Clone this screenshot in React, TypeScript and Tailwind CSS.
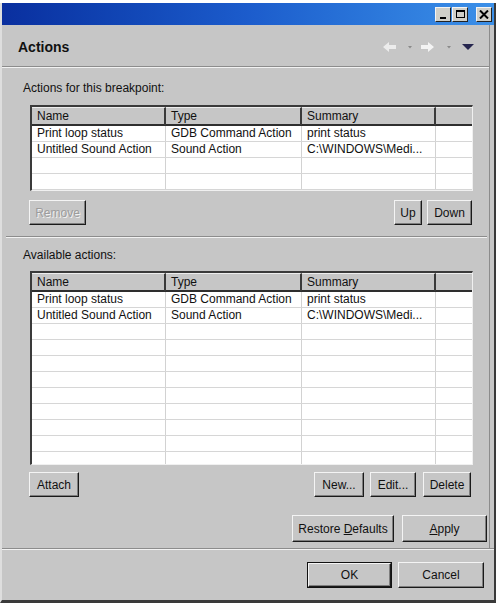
import React from "react";

const font = "font-['Liberation_Sans',Arial,sans-serif]";

type Row = [string, string, string];

const rows: Row[] = [
  ["Print loop status", "GDB Command Action", "print status"],
  ["Untitled Sound Action", "Sound Action", "C:\\WINDOWS\\Medi..."],
];

function Btn({
  children,
  className = "",
  disabled = false,
  primary = false,
}: {
  children: React.ReactNode;
  className?: string;
  disabled?: boolean;
  primary?: boolean;
}) {
  const inner = (
    <div
      className={`flex h-full w-full items-center justify-center border border-t-[#f4f4f4] border-l-[#f4f4f4] border-b-[#1a1a1a] border-r-[#1a1a1a] bg-[#c6c6c6] shadow-[inset_-1px_-1px_0_#7e7e7e] text-[12px] ${
        disabled ? "text-[#9c9c9c] [text-shadow:1px_1px_0_#f2f2f2]" : "text-[#111]"
      }`}
    >
      {children}
    </div>
  );
  if (primary) {
    return <div className={`border border-[#111] ${className}`}>{inner}</div>;
  }
  return <div className={className}>{inner}</div>;
}

function Table({ bodyHeight, rowCount }: { bodyHeight: string; rowCount: number }) {
  const filled: Row[] = [...rows];
  while (filled.length < rowCount) filled.push(["", "", ""]);
  return (
    <div className="ml-[28px] w-[443px] border-l-2 border-t-2 border-l-[#3a3a3a] border-t-[#3a3a3a] border-r border-b border-r-[#f0f0f0] border-b-[#f0f0f0] bg-white">
      <div className="grid h-[19px] grid-cols-[134px_136px_134px_1fr] border-b-2 border-[#2e2e2e] bg-[#c6c6c6] text-[12px] leading-[17px] text-[#111]">
        <div className="border-r-2 border-[#3a3a3a] pl-[5px] border-t border-t-[#eeeeee]">Name</div>
        <div className="border-r-2 border-[#3a3a3a] pl-[5px] border-t border-t-[#eeeeee]">Type</div>
        <div className="border-r-2 border-[#3a3a3a] pl-[5px] border-t border-t-[#eeeeee]">Summary</div>
        <div className="border-t border-t-[#eeeeee]" />
      </div>
      <div className={`overflow-hidden ${bodyHeight}`}>
        {filled.map((r, i) => (
          <div
            key={i}
            className="grid h-[16px] grid-cols-[134px_136px_134px_1fr] border-b border-[#d6d6d6] text-[12px] leading-[15px] text-[#111]"
          >
            <div className="truncate border-r border-[#d2d2d2] pl-[5px]">{r[0]}</div>
            <div className="truncate border-r border-[#d2d2d2] pl-[5px]">{r[1]}</div>
            <div className="truncate border-r border-[#d2d2d2] pl-[5px]">{r[2]}</div>
            <div />
          </div>
        ))}
      </div>
    </div>
  );
}

function Separator() {
  return (
    <div className="w-full">
      <div className="h-px bg-[#8c8c8c]" />
      <div className="h-px bg-[#f2f2f2]" />
    </div>
  );
}

function TitleButton({ children, className = "" }: { children: React.ReactNode; className?: string }) {
  return (
    <div
      className={`flex h-[15px] w-[16px] items-center justify-center border border-t-[#f4f4f4] border-l-[#f4f4f4] border-b-[#222] border-r-[#222] bg-[#d0cfc8] ${className}`}
    >
      {children}
    </div>
  );
}

export default function App() {
  return (
    <div className={`h-[608px] w-[499px] bg-white pt-[3px] ${font}`}>
      <div className="flex h-[600px] w-[496px] flex-col border-l-2 border-r-2 border-b-[3px] border-l-[#dedede] border-r-[#3a3a3a] border-b-[#3a3a3a] bg-[#c6c6c6]">
        {/* title bar */}
        <div className="flex h-[22px] items-center justify-end bg-gradient-to-r from-[#0a2f9f] via-[#1c5ccc] to-[#3c90e8] pr-[2px]">
          <TitleButton>
            <div className="mt-[7px] h-[2px] w-[6px] bg-black" />
          </TitleButton>
          <TitleButton className="ml-px">
            <div className="h-[8px] w-[9px] border border-t-2 border-black" />
          </TitleButton>
          <TitleButton className="ml-[8px]">
            <svg width="10" height="9" viewBox="0 0 10 9">
              <path d="M1 0.5 L9 8.5 M9 0.5 L1 8.5" stroke="#000" strokeWidth="2" />
            </svg>
          </TitleButton>
        </div>

        {/* page panel */}
        <div className="w-[488px] border-r border-[#8c8c8c]">
          <div className="flex h-[41px] items-center justify-between pl-[16px] pr-[12px] pt-[3px]">
            <span className="text-[14px] font-bold text-[#111]">Actions</span>
            <svg width="95" height="12" viewBox="0 0 95 12">
              <path d="M1 6 L7 1 L7 4 L14 4 L14 8 L7 8 L7 11 Z" fill="#ececec" />
              <path d="M26 5 L30 5 L28 7.5 Z" fill="#8a8a8a" />
              <path d="M52 6 L46 1 L46 4 L39 4 L39 8 L46 8 L46 11 Z" fill="#f4f4f4" />
              <path d="M65 5 L69 5 L67 7.5 Z" fill="#8a8a8a" />
              <path d="M80 3 L92 3 L86 9 Z" fill="#26264f" />
            </svg>
          </div>
          <Separator />

          <div className="mt-[13px] pl-[21px] text-[12px] leading-[14px] text-[#111]">
            Actions for this breakpoint:
          </div>
          <div className="mt-[10px]">
            <Table bodyHeight="h-[64px]" rowCount={5} />
          </div>
          <div className="mt-[9px] flex h-[25px] w-[470px] items-stretch pl-[27px]">
            <Btn disabled className="w-[57px]">
              Remove
            </Btn>
            <div className="flex-1" />
            <Btn className="w-[28px]">Up</Btn>
            <Btn className="ml-[5px] w-[45px]">Down</Btn>
          </div>

          <div className="mt-[11px] pl-[4px] pr-[2px]">
            <Separator />
          </div>

          <div className="mt-[10px] pl-[21px] text-[12px] leading-[14px] text-[#111]">Available actions:</div>
          <div className="mt-[9px]">
            <Table bodyHeight="h-[172px]" rowCount={11} />
          </div>
          <div className="mt-[7px] flex h-[25px] w-[469px] items-stretch pl-[27px]">
            <Btn className="w-[50px]">Attach</Btn>
            <div className="flex-1" />
            <Btn className="w-[50px]">New...</Btn>
            <Btn className="ml-[6px] w-[46px]">Edit...</Btn>
            <Btn className="ml-[7px] w-[48px]">Delete</Btn>
          </div>

          <div className="mt-[18px] flex h-[27px] items-stretch justify-end pr-[2px]">
            <Btn className="w-[102px]">
              Restore&nbsp;<span className="underline">D</span>efaults
            </Btn>
            <Btn className="ml-[8px] w-[85px]">
              <span className="underline">A</span>pply
            </Btn>
          </div>
          <div className="mt-[6px]" />
        </div>
        <Separator />

        <div className="mt-[12px] flex h-[26px] items-stretch justify-end pr-[10px]">
          <Btn primary className="w-[85px]">
            OK
          </Btn>
          <Btn className="ml-[6px] w-[86px]">Cancel</Btn>
        </div>
      </div>
    </div>
  );
}
